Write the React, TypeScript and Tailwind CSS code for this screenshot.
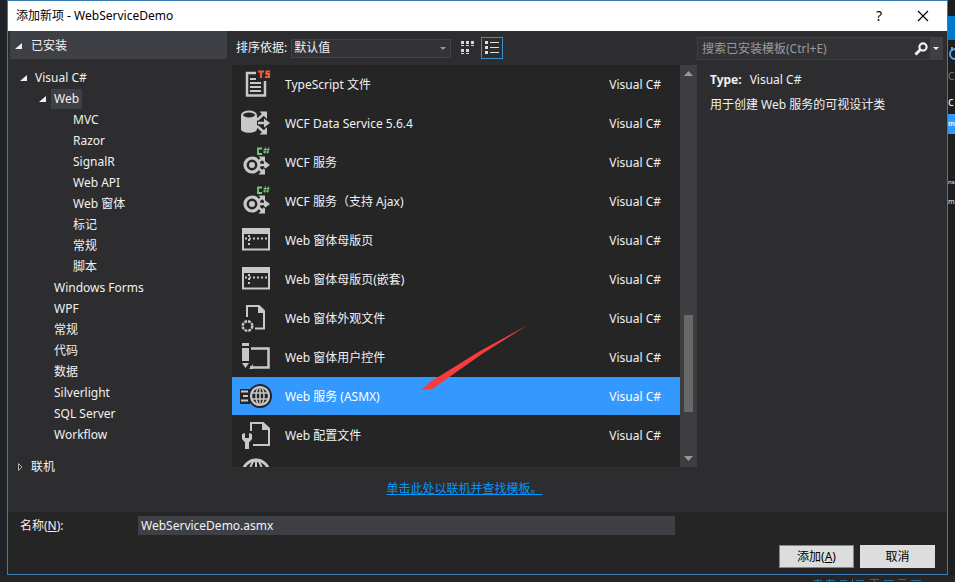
import { ReactNode } from "react";

interface TreeItem {
  label: string;
  level: number;
  open?: boolean;
  selected?: boolean;
}

interface Template {
  name: string;
  icon: ReactNode;
  selected?: boolean;
}

const GREY = "#c8c8c8";

const tree: TreeItem[] = [
  { label: "Visual C#", level: 0, open: true },
  { label: "Web", level: 1, open: true, selected: true },
  { label: "MVC", level: 2 },
  { label: "Razor", level: 2 },
  { label: "SignalR", level: 2 },
  { label: "Web API", level: 2 },
  { label: "Web 窗体", level: 2 },
  { label: "标记", level: 2 },
  { label: "常规", level: 2 },
  { label: "脚本", level: 2 },
  { label: "Windows Forms", level: 1 },
  { label: "WPF", level: 1 },
  { label: "常规", level: 1 },
  { label: "代码", level: 1 },
  { label: "数据", level: 1 },
  { label: "Silverlight", level: 1 },
  { label: "SQL Server", level: 1 },
  { label: "Workflow", level: 1 },
];

const levelPadding = ["pl-3", "pl-[31px]", "pl-[50px]"];

function Icon({ children }: { children: ReactNode }) {
  return (
    <svg className="h-8 w-8 shrink-0" viewBox="0 0 32 32" fill="none" stroke={GREY} strokeWidth={2.5} aria-hidden="true">
      {children}
    </svg>
  );
}

function TypeScriptIcon() {
  return (
    <Icon>
      <path d="M16 5H7v22.500H25V13" />
      <path d="M10 11h6M10 15h11M10 19h11M10 23h11" strokeWidth={2} />
      <g stroke="#f05a38" strokeWidth={2.2}>
        <path d="M18 3.500h6M21 3v7M30 3.500h-3.500v2.500h2.500v3H25" />
      </g>
    </Icon>
  );
}

function DataServiceIcon() {
  return (
    <Icon>
      <path d="M1 8v14c0 5 16 5 16 0V8z" fill={GREY} stroke="none" />
      <ellipse cx="9" cy="8" rx="7" ry="3.500" fill="#252526" strokeWidth={2} />
      <path d="M18 16h7M17 13l8-7M17 19l8 7" />
      <path d="M24 11.500l6 4.500-6 4.500zM19.500 4.500H27V12zM19.500 27.500H27V20z" fill={GREY} stroke="none" />
    </Icon>
  );
}

function WcfIcon() {
  return (
    <Icon>
      <circle cx="12" cy="19" r="7" strokeWidth={3.2} />
      <circle cx="12" cy="19" r="3" fill={GREY} stroke="none" />
      <path d="M18 16l5-4M19 19h6M18 22l5 4" strokeWidth={2.5} />
      <path d="M24 14.500l6 4.500-6 4.500zM18.500 10.500H25V17zM18.500 28.500H25V21z" fill={GREY} stroke="none" />
      <g stroke="#79c977" strokeWidth={1.8}>
        <path d="M22 2.500h-4v5.500h4" />
        <path d="M25.500 1.500l-1 6M28.500 1.500l-1 6M23.500 3.500h6M23 6h6" strokeWidth={1.1} />
      </g>
    </Icon>
  );
}

function MasterPageIcon() {
  return (
    <Icon>
      <path d="M3 7h26v18.500H3z" strokeWidth={2} />
      <path d="M2 4h28v6H2z" fill={GREY} stroke="none" />
      <path d="M5 14.500h22" strokeWidth={2} strokeDasharray="2 2" />
      <path d="M9 11v12" strokeWidth={2} strokeDasharray="2 2" />
    </Icon>
  );
}

function SkinIcon() {
  return (
    <Icon>
      <path d="M7 15V4h12l5 5v17.500H15" strokeWidth={2} />
      <path d="M18 3v8h7z" fill={GREY} stroke="none" />
      <circle cx="7.500" cy="24" r="4.800" strokeWidth={2.4} strokeDasharray="2.770 1" />
    </Icon>
  );
}

function UserControlIcon() {
  return (
    <Icon>
      <path d="M11 7.500h17.500v19H10" strokeWidth={2.5} />
      <path d="M2 2h7v3H2zM2 7h7v13H2zM2 22h7l-3.500 5zM9 28l4-5v5z" fill={GREY} stroke="none" />
    </Icon>
  );
}

function AsmxIcon() {
  return (
    <Icon>
      <path d="M0 9h10v15H0z" fill="#252526" stroke="none" />
      <circle cx="20" cy="16" r="12" fill="#252526" stroke="none" />
      <circle cx="20" cy="16" r="9" strokeWidth={2.2} />
      <path d="M11 13h18M11 19h18" strokeWidth={1.5} />
      <ellipse cx="20" cy="16" rx="4" ry="9" strokeWidth={1.5} />
      <path d="M20 7v18" strokeWidth={1.5} />
      <path d="M1 11.500h7M3 16h5M1 20.500h7" strokeWidth={2} />
    </Icon>
  );
}

function ConfigIcon() {
  return (
    <Icon>
      <path d="M11 12V4h12l6 5.500V26H13" strokeWidth={2} />
      <path d="M22 3v8h7z" fill={GREY} stroke="none" />
      <path d="M2 15v5l3 3.500V30h4v-6.500l3-3.500v-5l-3-1v5H5v-5z" fill={GREY} stroke="none" />
    </Icon>
  );
}

function GlobeIcon() {
  return (
    <Icon>
      <circle cx="16" cy="18" r="13" strokeWidth={3} />
      <path d="M16 5v26M3 14h26" strokeWidth={2} />
      <ellipse cx="16" cy="18" rx="6" ry="13" strokeWidth={2} />
    </Icon>
  );
}

const templates: Template[] = [
  { name: "TypeScript 文件", icon: <TypeScriptIcon /> },
  { name: "WCF Data Service 5.6.4", icon: <DataServiceIcon /> },
  { name: "WCF 服务", icon: <WcfIcon /> },
  { name: "WCF 服务（支持 Ajax)", icon: <WcfIcon /> },
  { name: "Web 窗体母版页", icon: <MasterPageIcon /> },
  { name: "Web 窗体母版页(嵌套)", icon: <MasterPageIcon /> },
  { name: "Web 窗体外观文件", icon: <SkinIcon /> },
  { name: "Web 窗体用户控件", icon: <UserControlIcon /> },
  { name: "Web 服务 (ASMX)", icon: <AsmxIcon />, selected: true },
  { name: "Web 配置文件", icon: <ConfigIcon /> },
];

function OpenArrow() {
  return (
    <svg className="h-2 w-2 shrink-0" viewBox="0 0 8 8" fill="#f1f1f1" aria-hidden="true">
      <path d="M7 1v6H0z" />
    </svg>
  );
}

function TitleBar() {
  return (
    <header className="flex h-[30px] items-center bg-white pr-3 pl-2 text-black">
      <h1 className="flex-1">添加新项 - WebServiceDemo</h1>
      <button className="w-6 text-sm" aria-label="帮助">?</button>
      <button className="ml-5 flex w-6 justify-center" aria-label="关闭">
        <svg className="h-3 w-3" viewBox="0 0 12 12" stroke="#000" strokeWidth={1.2} aria-hidden="true">
          <path d="M1 1l10 10M11 1L1 11" />
        </svg>
      </button>
    </header>
  );
}

function Sidebar() {
  return (
    <nav className="w-56 shrink-0">
      <button className="ml-0.5 flex h-7 w-[217px] items-center gap-2 bg-[#3f3f46] pt-0.5 pl-[5px]">
        <OpenArrow />
        已安装
      </button>
      <ul className="pt-2">
        {tree.map((item, i) => (
          <li key={i} className={`flex h-[21px] items-center ${levelPadding[item.level]}`}>
            {item.open && <OpenArrow />}
            <button className={`h-5 px-[3px] ${item.open ? "ml-1" : "ml-3"} ${item.selected ? "bg-[#3f3f46]" : ""}`}>
              {item.label}
            </button>
          </li>
        ))}
      </ul>
      <button className="mt-2.5 flex h-6 items-center gap-[7px] pl-2">
        <svg className="h-2 w-2" viewBox="0 0 8 8" fill="none" stroke="#b0b0b0" aria-hidden="true">
          <path d="M2.500 0.500v7L6 4z" />
        </svg>
        联机
      </button>
    </nav>
  );
}

function Toolbar() {
  return (
    <div className="flex h-[34px] items-center pl-1">
      <label htmlFor="sort">排序依据:</label>
      <div className="relative ml-1">
        <select
          id="sort"
          className="h-[19px] w-40 appearance-none border border-[#434346] bg-[#333337] pl-0.5 text-[#f1f1f1]"
        >
          <option>默认值</option>
        </select>
        <svg className="pointer-events-none absolute top-2 right-1 h-1 w-2" viewBox="0 0 8 4" fill="#999" aria-hidden="true">
          <path d="M1 0h6L4 3z" />
        </svg>
      </div>
      <button className="ml-1 flex h-[22px] w-6 items-center justify-center" aria-label="小图标">
        <svg className="h-4 w-4" viewBox="0 0 16 16" fill="#d8d8d8" aria-hidden="true">
          <path d="M2 1h3v3H2zM7 1h3v3H7zM12 1h3v3h-3zM2 5h3v1H2zM7 5h3v1H7zM12 5h3v1h-3zM2 9h3v3H2zM7 9h3v3H7zM2 13h3v1H2zM7 13h3v1H7z" />
        </svg>
      </button>
      <button
        className="ml-0.5 flex h-[22px] w-[22px] items-center justify-center border border-[#3c8fd0]"
        aria-label="列表"
      >
        <svg className="h-4 w-4" viewBox="0 0 16 16" fill="#e0e0e0" aria-hidden="true">
          <path d="M1 1h3v3H1zM1 6h3v3H1zM1 11h3v3H1zM6 2h9v1H6zM6 7h9v1H6zM6 12h9v1H6z" />
        </svg>
      </button>
    </div>
  );
}

function Scrollbar() {
  return (
    <div className="flex w-[17px] shrink-0 flex-col items-center bg-[#3e3e42] py-1.5">
      <svg className="h-[5px] w-[9px]" viewBox="0 0 9 5" fill="#999" aria-hidden="true">
        <path d="M4.500 0L9 5H0z" />
      </svg>
      <div className="flex w-full flex-1 flex-col items-center">
        <div className="flex-[239]" />
        <div className="w-[9px] flex-[97] bg-[#686868]" />
        <div className="flex-[44]" />
      </div>
      <svg className="h-[5px] w-[9px]" viewBox="0 0 9 5" fill="#999" aria-hidden="true">
        <path d="M0 0h9L4.500 5z" />
      </svg>
    </div>
  );
}

function TemplateList() {
  return (
    <div className="relative flex bg-[#252526]">
      <ul className="min-w-0 flex-1">
        {templates.map((t) => (
          <li key={t.name} className={`h-[39px] pb-px ${t.selected ? "text-white" : ""}`}>
            <button
              className={`flex h-full w-full items-center pr-[19px] pl-2 text-left ${t.selected ? "bg-[#3399ff]" : ""}`}
            >
              {t.icon}
              <span className="ml-[13px] flex-1 pt-0.5">{t.name}</span>
              <span className="pt-0.5">Visual C#</span>
            </button>
          </li>
        ))}
        <li className="h-3 overflow-hidden pl-2">
          <GlobeIcon />
        </li>
      </ul>
      <Scrollbar />
      <svg
        className="pointer-events-none absolute top-[257px] left-[188px] h-[70px] w-[112px]"
        viewBox="0 0 112 70"
        fill="#f83c3c"
        aria-hidden="true"
      >
        <path d="M108 3L60 29 10 60 1 68l11-1 6-4 44-31z" />
      </svg>
    </div>
  );
}

function Details() {
  return (
    <aside className="w-[250px] shrink-0">
      <div className="mt-1.5 mr-1 flex h-[23px] items-center border border-[#3f3f46] bg-[#333337]">
        <input
          type="search"
          aria-label="搜索已安装模板"
          placeholder="搜索已安装模板(Ctrl+E)"
          className="min-w-0 flex-1 bg-transparent pl-1 outline-none placeholder:text-[#999]"
        />
        <button aria-label="搜索">
          <svg className="h-[14px] w-[14px]" viewBox="0 0 14 14" fill="none" stroke="#f1f1f1" strokeWidth={2.2} aria-hidden="true">
            <circle cx="9" cy="5" r="3.600" />
            <path d="M6.500 7.500L1.500 12.500" strokeWidth={3} />
          </svg>
        </button>
        <button className="ml-0.5 flex h-full w-3 items-center justify-center bg-[#3f3f46]" aria-label="搜索选项">
          <svg className="h-1 w-2" viewBox="0 0 8 4" fill="#f1f1f1" aria-hidden="true">
            <path d="M1 0h6L4 3z" />
          </svg>
        </button>
      </div>
      <dl className="mt-2.5 flex h-5 items-center gap-2 pl-[13px]">
        <dt className="font-bold">Type:</dt>
        <dd>Visual C#</dd>
      </dl>
      <p className="mt-[5px] pl-[13px] leading-5">用于创建 Web 服务的可视设计类</p>
    </aside>
  );
}

function Footer() {
  return (
    <footer className="bg-[#252526] pb-1.5">
      <div className="flex h-[27px] items-center pl-3">
        <label htmlFor="name" className="w-[118px]">
          名称(<u>N</u>):
        </label>
        <input
          id="name"
          defaultValue="WebServiceDemo.asmx"
          className="mr-[272px] h-[19px] min-w-0 flex-1 bg-[#3f3f46] px-[3px] outline-none"
        />
      </div>
      <div className="mt-1.5 flex justify-end gap-1.5 pr-3 text-black">
        <button className="h-[23px] w-[75px] border border-[#3399ff] bg-[#dddddd]">
          添加(<u>A</u>)
        </button>
        <button className="h-[23px] w-[75px] bg-[#dddddd]">取消</button>
      </div>
    </footer>
  );
}

// Slice of the editor window that shows beside the dialog
function EditorEdge() {
  return (
    <div className="w-[7px] shrink-0 bg-[#1e1e1e] text-[8px]">
      <div className="mt-4 h-6 bg-[#007acc]" />
      <svg className="mt-1.5 h-4 w-[7px]" viewBox="0 0 7 16" fill="none" stroke="#55a5e8" strokeWidth={2} aria-hidden="true">
        <path d="M7 3a5 5 0 0 0 0 10M4 1v4" />
      </svg>
      <div className="mt-2 h-5 text-[10px] text-[#777]">C</div>
      <div className="mt-1 h-5 text-xs">c</div>
      <div className="flex h-5 items-center bg-[#3399ff] text-[7px] font-bold">m</div>
      <div className="mt-[38px] flex h-5 items-center text-[6px]">ns</div>
      <div className="flex h-5 items-center text-[7px]">m</div>
    </div>
  );
}

export default function App() {
  return (
    <div className="min-h-screen bg-[#252526] font-['Noto_Sans','Noto_Sans_CJK_SC',sans-serif] text-xs text-[#f1f1f1]">
      <div className="flex">
        <div className="w-[7px] shrink-0 bg-[#1f2226]" />
        <main className="min-w-0 flex-1 border border-[#3a7ab5] bg-[#2d2d30]">
          <TitleBar />
          <div className="flex h-[481px]">
            <Sidebar />
            <section className="min-w-0 flex-1">
              <Toolbar />
              <TemplateList />
              <div className="flex h-11 items-center justify-center">
                <a href="#online" className="text-[#0097fb] underline">
                  单击此处以联机并查找模板。
                </a>
              </div>
            </section>
            <Details />
          </div>
          <Footer />
        </main>
        <EditorEdge />
      </div>
      {/* tops of the status text under the dialog */}
      <svg className="mt-1 mr-[30px] ml-auto block h-[3px] w-[113px]" viewBox="0 0 113 3" fill="#1c6ea8" aria-hidden="true">
        <path d="M2 1h8v1H2zM5 0h1v3H5zM14 1h9v1h-9zM17 0h1v3h-1zM28 1h7v1h-7zM40 0h1v3h-1zM44 1h8v1h-8zM58 0h9v1h-9zM62 1h1v2h-1zM72 1h10v1H72zM86 0h8v1h-8zM99 1h10v1H99z" />
      </svg>
    </div>
  );
}
